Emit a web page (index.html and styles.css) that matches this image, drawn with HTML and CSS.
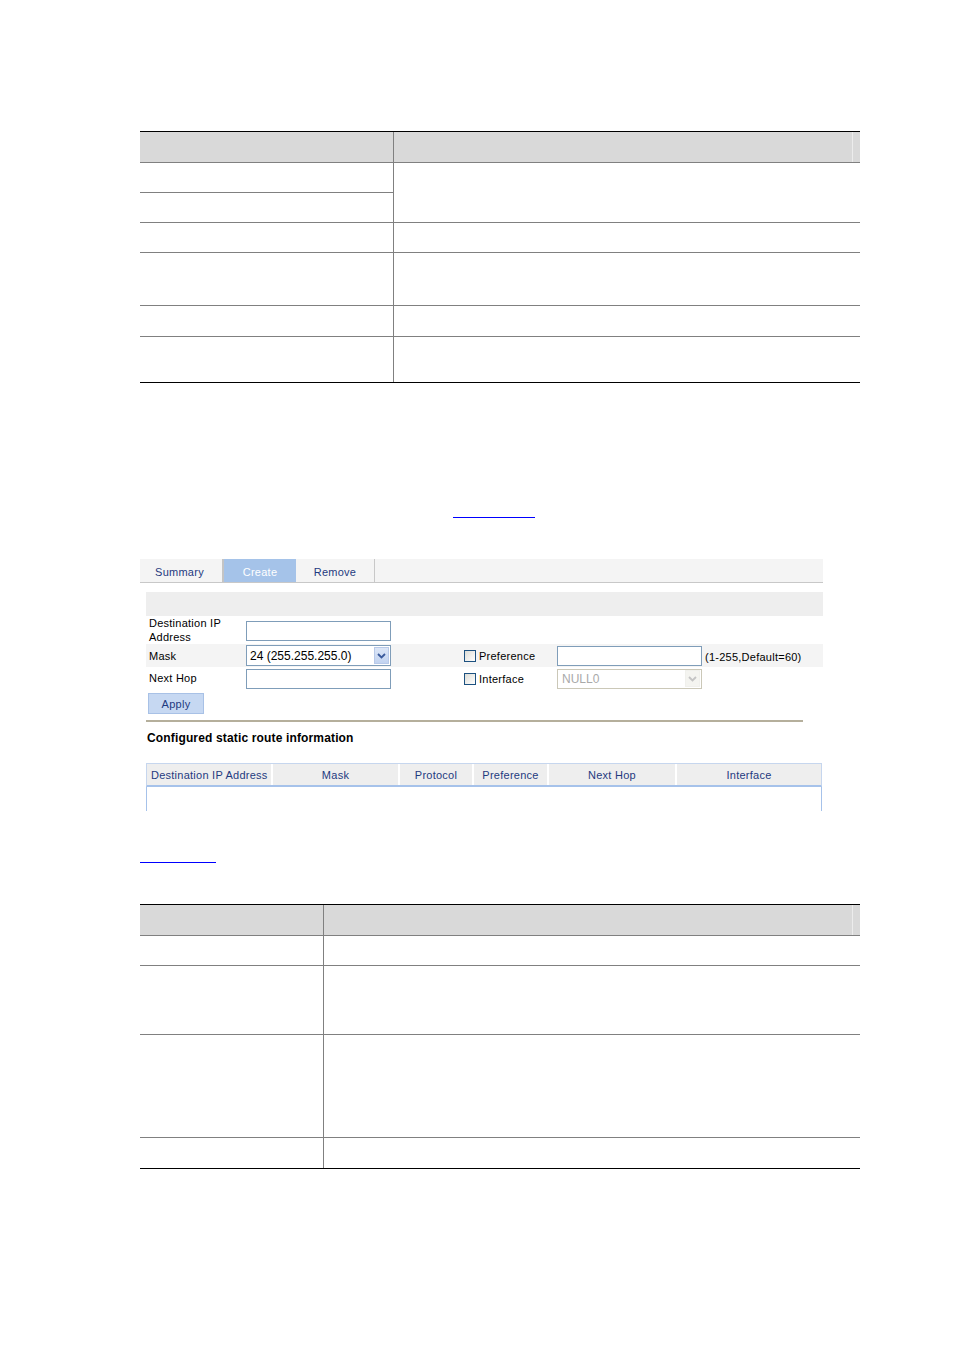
FILE: index.html
```html
<!DOCTYPE html>
<html>
<head>
<meta charset="utf-8">
<link rel="stylesheet" href="styles.css">
</head>
<body>
<div class="page">
  <div class="doc-table t1">
    <div class="c h l"></div><div class="c h r"><span class="hl"></span></div>
    <div class="c l r1"></div>
    <div class="c r span2"></div>
    <div class="c l r2"></div>
    <div class="c l r3"></div><div class="c r r3"></div>
    <div class="c l r4"></div><div class="c r r4"></div>
    <div class="c l r5"></div><div class="c r r5"></div>
    <div class="c l r6 last"></div><div class="c r r6 last"></div>
  </div>

  <div class="link link1"></div>

  <div class="ui">
    <div class="tabs">
      <div class="tab tab-summary">Summary</div>
      <div class="tab tab-create">Create</div>
      <div class="tab tab-remove">Remove</div>
    </div>

    <div class="form">
      <div class="bar"></div>
      <div class="row row-dest">
        <div class="lbl two">Destination IP<br>Address</div>
        <div class="field"><div class="input"></div></div>
      </div>
      <div class="row row-mask alt">
        <div class="lbl">Mask</div>
        <div class="field">
          <div class="select"><span class="val">24 (255.255.255.0)</span><span class="btn"><svg width="9" height="6" viewBox="0 0 9 6"><path d="M1 1 L4.5 4.5 L8 1" fill="none" stroke="#3a5a9c" stroke-width="1.8"/></svg></span></div>
        </div>
        <div class="chk-cell"><span class="chk"></span><span class="chk-lbl">Preference</span></div>
        <div class="field2"><div class="input"></div></div>
        <div class="hint">(1-255,Default=60)</div>
      </div>
      <div class="row row-hop">
        <div class="lbl">Next Hop</div>
        <div class="field"><div class="input"></div></div>
        <div class="chk-cell"><span class="chk"></span><span class="chk-lbl">Interface</span></div>
        <div class="field2">
          <div class="select disabled"><span class="val">NULL0</span><span class="btn"><svg width="9" height="6" viewBox="0 0 9 6"><path d="M1 1 L4.5 4.5 L8 1" fill="none" stroke="#c4c4c4" stroke-width="1.8"/></svg></span></div>
        </div>
      </div>
      <div class="apply">Apply</div>
      <div class="sep"></div>
      <div class="heading">Configured static route information</div>
      <div class="routes">
        <div class="rh">
          <div class="rc c-dest">Destination IP Address</div>
          <div class="rc c-mask">Mask</div>
          <div class="rc c-proto">Protocol</div>
          <div class="rc c-pref">Preference</div>
          <div class="rc c-hop">Next Hop</div>
          <div class="rc c-if">Interface</div>
        </div>
        <div class="rb"></div>
      </div>
    </div>
  </div>

  <div class="link link2"></div>

  <div class="doc-table t2">
    <div class="c h l"></div><div class="c h r"><span class="hl"></span></div>
    <div class="c l s1"></div><div class="c r s1"></div>
    <div class="c l s2"></div><div class="c r s2"></div>
    <div class="c l s3"></div><div class="c r s3"></div>
    <div class="c l s4 last"></div><div class="c r s4 last"></div>
  </div>
</div>
</body>
</html>
```

FILE: styles.css
```css
* { box-sizing: border-box; }
html, body { margin: 0; padding: 0; background: #fff; }
body { font-family: "Liberation Sans", Arial, sans-serif; }

.page { padding: 131px 0 0 140px; width: 954px; height: 1350px; }

/* document tables */
.doc-table {
  display: grid;
  width: 720px;
  border-top: 1px solid #000;
  border-bottom: 1px solid #000;
}
.t1 { grid-template-columns: 254px 466px; grid-template-rows: 31px 30px 30px 30px 53px 31px 45px; }
.t2 { grid-template-columns: 184px 536px; grid-template-rows: 31px 30px 69px 103px 30px; margin-top: 41px; }
.c { border-bottom: 1px solid #808080; }
.c.l { border-right: 1px solid #808080; }
.c.last { border-bottom: none; }
.c.h { background: #d9d9d9; position: relative; }
.c.h .hl { position: absolute; right: 7px; top: 0; bottom: 0; width: 1px; background: #ececec; }
.t1 .span2 { grid-row: 2 / span 2; grid-column: 2; }
.t1 .r1 { grid-row: 2; grid-column: 1; }
.t1 .r2 { grid-row: 3; grid-column: 1; }

.link { height: 0; border-bottom: 1px solid #0000ff; }
.link1 { margin: 134px 0 0 313px; width: 82px; }
.link2 { margin: 51px 0 0 0; width: 76px; }

/* UI screenshot */
.ui {
  margin-top: 41px;
  width: 683px;
  font-size: 11px;
  letter-spacing: 0.25px;
}
.tabs {
  display: flex;
  height: 24px;
  background: #f4f4f4;
  border-bottom: 1px solid #c8c8c8;
}
.tab {
  color: #1f3a80;
  line-height: 23px;
  padding-top: 2px;
  text-align: center;
}
.tab-summary { width: 84px; border-right: 2px solid #c4c4c4; padding-right: 3px; }
.tab-create { width: 72px; background: #a5c3e9; color: #fff; }
.tab-remove { width: 79px; border-right: 1px solid #c8c8c8; }

.form { margin-left: 6px; width: 677px; padding-top: 9px; }
.bar { height: 24px; background: #eeeeee; }
.row { display: flex; align-items: center; }
.row.alt { background: #f4f4f4; }
.row-dest { height: 28px; }
.row-mask { height: 23px; }
.row-hop { height: 23px; }
.lbl { width: 100px; padding-left: 3px; color: #000; line-height: 14px; }
.row-hop .lbl { margin-top: -2px; }
.field { width: 218px; }
.field2 { width: 148px; }
.input {
  width: 145px; height: 20px;
  border: 1px solid #7f9db9;
  background: #fff;
}
.row-dest .input { margin-top: 1px; }
.select {
  width: 145px; height: 21px;
  border: 1px solid #7f9db9;
  background: #fff;
  display: flex; align-items: center;
  position: relative;
  font-size: 12px; letter-spacing: 0;
}
.select .val { padding-left: 3px; flex: 1; color: #000; }
.select .btn {
  width: 15px; height: 17px; margin-right: 1px;
  background: linear-gradient(#dce6f7, #c2d3f0);
  border: 1px solid #b8c9e8;
  display: flex; align-items: center; justify-content: center;
}
.select.disabled { border-color: #cbc8b8; height: 20px; }
.select.disabled .val { color: #a9a9a9; padding-left: 4px; }
.select.disabled .btn { background: #f4f4f0; border-color: #f0f0ec; }

.chk-cell { width: 93px; display: flex; align-items: center; }
.chk {
  width: 12px; height: 12px;
  border: 1px solid #1c5180;
  background: linear-gradient(135deg, #dcdcd6, #fff);
  margin-right: 3px;
}
.row-hop .chk { margin-top: 1px; }
.chk-lbl { color: #000; padding-top: 1px; }
.hint { padding-left: 0; color: #000; padding-top: 2px; }

.apply {
  margin: 3px 0 0 2px;
  width: 56px; height: 21px;
  background: #c6d8f2;
  border: 1px solid #a8c1e6;
  color: #1f3a80;
  text-align: center;
  line-height: 20px;
}
.sep { margin-top: 6px; width: 657px; border-top: 2px solid #b5af9c; }
.heading {
  margin-top: 8px; padding-left: 1px;
  font-size: 12px; font-weight: bold; letter-spacing: 0.15px;
  line-height: 16px; color: #000;
}
.routes { margin-top: 17px; width: 676px; }
.rh {
  display: flex; height: 24px;
  background: #eeeeee;
  border-top: 1px solid #c6d6ee;
  border-bottom: 2px solid #a6c2ea;
  border-left: 1px solid #c6d6ee;
  border-right: 1px solid #c6d6ee;
}
.rc {
  color: #1f3a80; line-height: 23px; text-align: center;
  border-right: 2px solid #fff;
}
.rc:last-child { border-right: none; }
.c-dest { width: 126px; text-align: left; padding-left: 4px; }
.c-mask { width: 127px; }
.c-proto { width: 74px; }
.c-pref { width: 75px; }
.c-hop { width: 128px; }
.c-if { flex: 1; }
.rb { height: 24px; border-left: 1px solid #a6c2ea; border-right: 1px solid #a6c2ea; }
```
